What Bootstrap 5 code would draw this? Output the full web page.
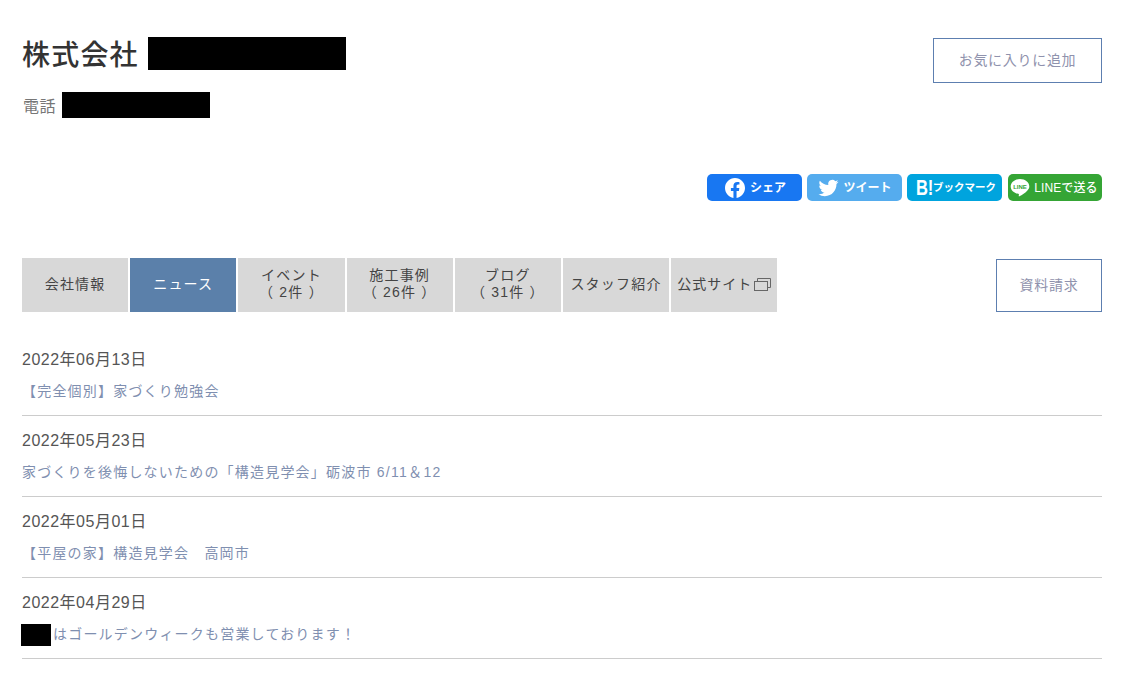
<!DOCTYPE html>
<html lang="ja">
<head>
    <meta charset="UTF-8">
    <meta name="viewport" content="width=device-width, initial-scale=1.0">
    <title>会社情報</title>
    <link href="https://cdn.jsdelivr.net/npm/bootstrap@5.3.0/dist/css/bootstrap.min.css" rel="stylesheet">
    <style>
        body { font-family: "Liberation Sans", "Noto Sans CJK JP", sans-serif; color: #444; background: #fff; }
        .page-wrap { padding: 37px 26px 0 22px; }
        .head-area { height: 137px; }
        .company-name { font-size: 28px; font-weight: 500; line-height: 33px; letter-spacing: 1.2px; color: #333; margin: 0; }
        .company-text { position: relative; top: 2px; }
        .hidden-block { display: inline-block; background: #000; }
        .name-block { width: 198px; height: 33px; margin-left: 9px; }
        .tel-line { font-size: 16px; line-height: 26px; margin-top: 22px; color: #777; letter-spacing: .5px; margin-left: 1px; }
        .tel-text { position: relative; top: 2px; }
        .tel-block { width: 148px; height: 26px; margin-left: 6px; }
        .outline-box { border: 1px solid #5d7fb0; color: #8f92ad; font-size: 14px; letter-spacing: .7px; background: #fff; border-radius: 0; padding: 0 0 1px; }
        .fav-box { width: 169px; height: 45px; margin-top: 1px; }
        .share-row { gap: 5px; height: 27px; }
        .share-btn { width: 95px; height: 27px; border-radius: 5px; color: #fff; font-size: 12px; font-weight: 700; white-space: nowrap; }
        .share-fb { background: #1877f2; gap: 5px; padding-left: 2px; }
        .share-tw { background: #55acee; gap: 3px; padding-left: 2px; }
        .share-tw svg { width: 23px; height: 20px; margin-left: -2px; }
        .share-hb { background: #00a4de; font-size: 10.5px; padding-left: 2px; }
        .share-ln { background: #35a535; width: 94px; margin-left: 1px; }
        .hb-mark { font-size: 22px; font-weight: 700; line-height: 1; transform: scaleX(.75); margin: 0 -3px 0 -2px; }
        .ln-text { font-size: 12px; font-weight: 500; letter-spacing: .1px; }
        .ln-icon { margin-left: -2px; }
        .tab-row { margin-top: 57px; height: 54px; }
        .tab-list { gap: 2px; }
        .tab-item { width: 106.2px; height: 54px; padding-bottom: 2px; background: #d8d8d8; color: #444; font-size: 14px; line-height: 17px; letter-spacing: 1.2px; text-align: center; text-decoration: none; white-space: nowrap; }
        .tab-active { background: #5b80aa; color: #fff; }
        .tab-site { gap: 2px; letter-spacing: 1px; }
        .doc-box { width: 106px; height: 53px; margin-top: 1px; }
        .news-item { height: 81px; border-bottom: 1px solid #ccc; }
        .news-date { font-size: 16px; line-height: 24px; padding-top: 13px; color: #555; letter-spacing: .5px; }
        .news-link { display: block; font-size: 14px; line-height: 20px; margin-top: 9px; letter-spacing: 1.2px; color: #7f8fb0; text-decoration: none; }
        .news-num { letter-spacing: 1.3px; }
        .news-list { margin-top: 23px; }
        .last-block { width: 30px; height: 22px; margin: 0 2px 0 -1px; vertical-align: middle; }
    </style>
</head>
<body>
    <div class="page-wrap">
        <!-- 会社名 -->
        <div class="head-area d-flex justify-content-between align-items-start">
            <div>
                <h1 class="company-name d-flex align-items-center"><span class="company-text">株式会社</span><span class="hidden-block name-block"></span></h1>
                <div class="tel-line d-flex align-items-center"><span class="tel-text">電話</span><span class="hidden-block tel-block"></span></div>
            </div>
            <button type="button" class="btn outline-box fav-box">お気に入りに追加</button>
        </div>

        <!-- シェアボタン -->
        <div class="share-row d-flex justify-content-end">
            <a class="share-btn share-fb d-flex align-items-center justify-content-center text-decoration-none" href="#">
                <svg width="20" height="20" viewBox="0 0 24 24" fill="#fff"><path d="M24 12.073c0-6.627-5.373-12-12-12s-12 5.373-12 12c0 5.99 4.388 10.954 10.125 11.854v-8.385H7.078v-3.47h3.047V9.43c0-3.007 1.792-4.669 4.533-4.669 1.312 0 2.686.235 2.686.235v2.953H15.83c-1.491 0-1.956.925-1.956 1.874v2.25h3.328l-.532 3.47h-2.796v8.385C19.612 23.027 24 18.062 24 12.073z"/></svg>
                シェア
            </a>
            <a class="share-btn share-tw d-flex align-items-center justify-content-center text-decoration-none" href="#">
                <svg viewBox="0 0 24 24" fill="#fff"><path d="M23.953 4.57a10 10 0 01-2.825.775 4.958 4.958 0 002.163-2.723c-.951.555-2.005.959-3.127 1.184a4.92 4.92 0 00-8.384 4.482C7.69 8.095 4.067 6.13 1.64 3.162a4.822 4.822 0 00-.666 2.475c0 1.71.87 3.213 2.188 4.096a4.904 4.904 0 01-2.228-.616v.06a4.923 4.923 0 003.946 4.827 4.996 4.996 0 01-2.212.085 4.936 4.936 0 004.604 3.417 9.867 9.867 0 01-6.102 2.105c-.39 0-.779-.023-1.17-.067a13.995 13.995 0 007.557 2.209c9.053 0 13.998-7.496 13.998-13.985 0-.21 0-.42-.015-.63A9.935 9.935 0 0024 4.59z"/></svg>
                ツイート
            </a>
            <a class="share-btn share-hb d-flex align-items-center justify-content-center text-decoration-none" href="#">
                <span class="hb-mark">B!</span>ブックマーク
            </a>
            <a class="share-btn share-ln d-flex align-items-center justify-content-center gap-1 text-decoration-none" href="#">
                <svg class="ln-icon" width="20" height="20" viewBox="0 0 20 20"><path fill="#fff" d="M10 1C4.8 1 .7 4.3.7 8.4c0 3.6 3.2 6.700 7.600 7.300.6.1.7.5.6 1l-.2 1.200c0 .4.3.6.7.4 2.500-1.400 6.200-3.700 8-5.900 1-1.200 1.900-2.400 1.900-4C19.300 4.300 15.200 1 10 1z"/><text x="10" y="10.800" text-anchor="middle" fill="#35a535" font-size="6" font-weight="700" font-family="Liberation Sans, sans-serif">LINE</text></svg>
                <span class="ln-text">LINEで送る</span>
            </a>
        </div>

        <!-- タブ -->
        <div class="tab-row d-flex justify-content-between align-items-start">
            <div class="tab-list d-flex">
                <a class="tab-item d-flex align-items-center justify-content-center" href="#">会社情報</a>
                <a class="tab-item tab-active d-flex align-items-center justify-content-center" href="#">ニュース</a>
                <a class="tab-item d-flex align-items-center justify-content-center" href="#"><span>イベント<br>（ 2件 ）</span></a>
                <a class="tab-item d-flex align-items-center justify-content-center" href="#"><span>施工事例<br>（ 26件 ）</span></a>
                <a class="tab-item d-flex align-items-center justify-content-center" href="#"><span>ブログ<br>（ 31件 ）</span></a>
                <a class="tab-item d-flex align-items-center justify-content-center" href="#">スタッフ紹介</a>
                <a class="tab-item tab-site d-flex align-items-center justify-content-center" href="#">公式サイト
                    <svg width="17" height="13" viewBox="0 0 17 13" fill="none" stroke="#666"><rect x=".5" y="3.500" width="13" height="9"/><path d="M3.500 3.500V.5h13v9h-3"/></svg>
                </a>
            </div>
            <button type="button" class="btn outline-box doc-box">資料請求</button>
        </div>

        <!-- ニュース一覧 -->
        <div class="news-list">
            <div class="news-item">
                <div class="news-date">2022年06月13日</div>
                <a class="news-link" href="#">【完全個別】家づくり勉強会</a>
            </div>
            <div class="news-item">
                <div class="news-date">2022年05月23日</div>
                <a class="news-link" href="#">家づくりを後悔しないための「構造見学会」砺波市 <span class="news-num">6/11＆12</span></a>
            </div>
            <div class="news-item">
                <div class="news-date">2022年05月01日</div>
                <a class="news-link" href="#">【平屋の家】構造見学会　高岡市</a>
            </div>
            <div class="news-item">
                <div class="news-date">2022年04月29日</div>
                <a class="news-link" href="#"><span class="hidden-block last-block"></span>はゴールデンウィークも営業しております！</a>
            </div>
        </div>
    </div>
    <script src="https://cdn.jsdelivr.net/npm/bootstrap@5.3.0/dist/js/bootstrap.bundle.min.js"></script>
</body>
</html>
